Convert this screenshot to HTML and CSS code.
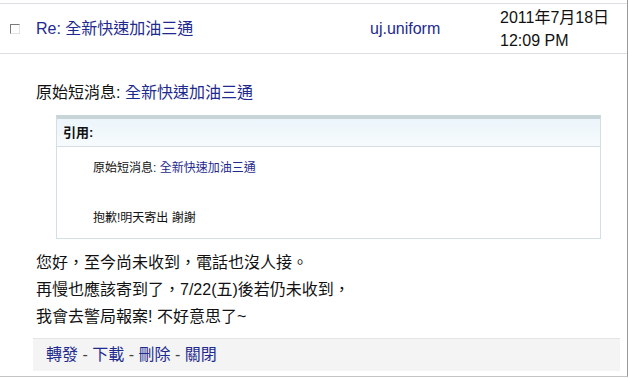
FILE: index.html
```html
<!DOCTYPE html>
<html lang="zh-Hant">
<head>
  <meta charset="UTF-8" />
  <title>短消息</title>
  <link rel="stylesheet" href="styles.css">
</head>
<body>
  <div class="page">
    <div class="msg-row">
      <span class="check"></span>
      <a class="subject" href="#">Re: 全新快速加油三通</a>
      <a class="sender" href="#">uj.uniform</a>
      <div class="date">2011年7月18日<br>12:09 PM</div>
    </div>
    <div class="msg-body">
      <p class="orig">原始短消息: <a href="#">全新快速加油三通</a></p>
      <div class="quote">
        <div class="quote-head">引用:</div>
        <div class="quote-body">
          <p>原始短消息: <a href="#">全新快速加油三通</a></p>
          <p class="reply">抱歉!明天寄出 謝謝</p>
        </div>
      </div>
      <p class="text">
        您好，至今尚未收到，電話也沒人接。<br>
        再慢也應該寄到了，7/22(五)後若仍未收到，<br>
        我會去警局報案! 不好意思了~
      </p>
      <div class="actions">
        <a href="#">轉發</a> - <a href="#">下載</a> - <a href="#">刪除</a> - <a href="#">關閉</a>
      </div>
    </div>
  </div>
</body>
</html>
```

FILE: styles.css
```css
:root {
  --link: #1e2a8e;
  --text: #111;
  --line: #dcdfe2;
}
body {
  margin: 0;
  background: #fff;
  color: var(--text);
  font-family: 'Liberation Sans', 'Noto Sans CJK TC', Arial, sans-serif;
  font-size: 16px;
}
a {
  color: var(--link);
  text-decoration: none;
}
p {
  margin: 0;
}
.page {
  width: 627px;
  height: 376px;
  border-right: 1px solid #9a9a9a;
  border-bottom: 1px solid #c4c4c4;
  overflow: hidden;
}
.msg-row {
  margin-top: 3px;
  height: 49px;
  border-top: 1px solid var(--line);
  border-bottom: 1px solid var(--line);
  display: grid;
  grid-template-columns: 26px 334px 130px 1fr;
  align-items: center;
  padding-left: 10px;
}
.check {
  width: 8px;
  height: 8px;
  border-top: 1px solid #7a7a7a;
  border-left: 1px solid #7a7a7a;
  border-right: 1px solid #e2e2e2;
  border-bottom: 1px solid #e2e2e2;
  margin-top: 1px;
}
.subject, .sender {
  line-height: 20px;
  margin-top: 1px;
}
.date {
  line-height: 23px;
  margin-top: 1px;
}
.msg-body {
  padding-left: 36px;
}
.orig {
  margin-top: 27px;
  line-height: 24px;
}
.quote {
  margin: 10px 0 0 20px;
  width: 543px;
  border: 1px solid #d3dfe2;
  border-top: 4px solid #c7d5d9;
}
.quote-head {
  height: 27px;
  line-height: 27px;
  padding-left: 6px;
  font-size: 13px;
  font-weight: bold;
  background: linear-gradient(#ebf5fb, #f7fbfd);
  border-bottom: 1px solid #d6dde0;
}
.quote-body {
  padding: 11px 0 10px 36px;
  font-size: 12px;
  line-height: 20px;
}
.quote-body .reply {
  margin-top: 30px;
}
.text {
  margin-top: 10px;
  line-height: 27px;
}
.actions {
  margin: 8px 0 0 -3px;
  width: 574px;
  height: 32px;
  line-height: 32px;
  padding-left: 13px;
  background: #f4f4f4;
  border-top: 1px solid #e4e4e4;
  color: #444;
}
```
